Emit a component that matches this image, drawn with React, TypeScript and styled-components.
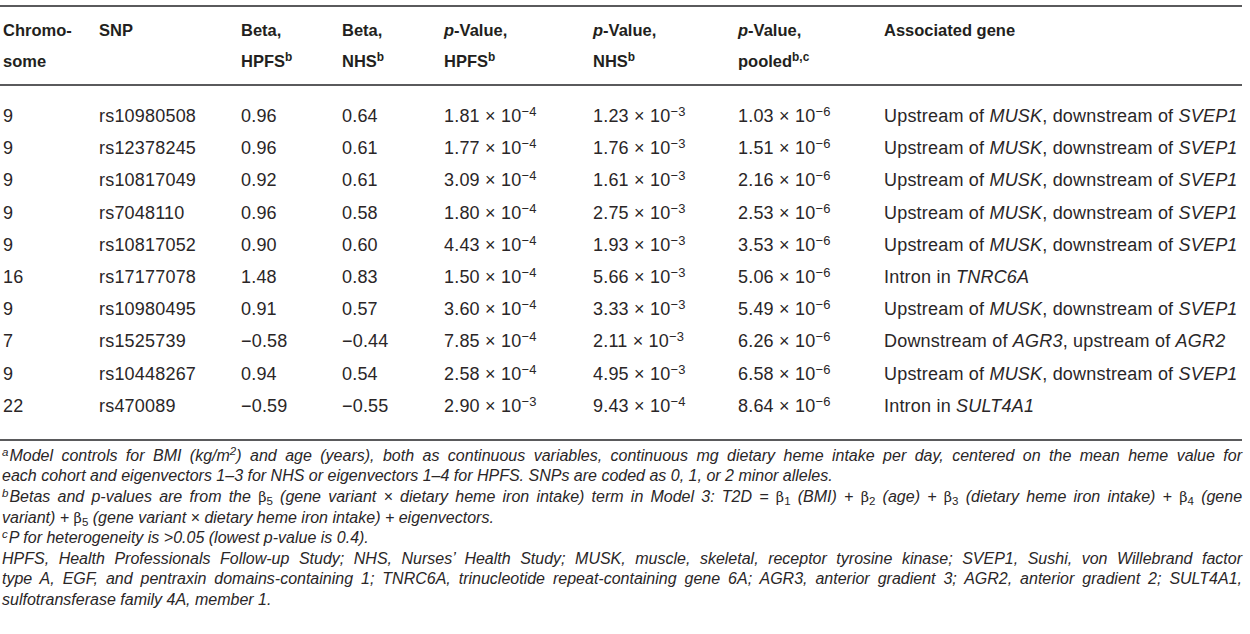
import React from "react";
import styled, { createGlobalStyle } from "styled-components";

const GlobalStyle = createGlobalStyle`
  html, body { margin: 0; padding: 0; background: #ffffff; }
  body {
    font-family: "Liberation Sans", Arial, Helvetica, sans-serif;
    color: #231f20;
  }
`;

const COLS = "96px 142px 101px 102px 149px 145px 146px 1fr";

const Page = styled.div`
  width: 1242px;
  padding-top: 5px;
`;

const Table = styled.div`
  display: flex;
  flex-direction: column;
`;

const HeaderRow = styled.div`
  display: grid;
  grid-template-columns: ${COLS};
  padding: 8px 0 7px 3px;
  border-top: 2px solid #5a5a5c;
  border-bottom: 2px solid #5a5a5c;
`;

const HeadCell = styled.div`
  font-weight: 700;
  font-size: 16.5px;
  line-height: 31px;
  white-space: nowrap;
`;

const Body = styled.div`
  display: flex;
  flex-direction: column;
  padding: 14px 0 17px 0;
  border-bottom: 2px solid #5a5a5c;
`;

const Row = styled.div`
  display: grid;
  grid-template-columns: ${COLS};
  padding-left: 3px;
  height: 32.2px;
  align-items: center;
`;

const Cell = styled.div`
  font-size: 18px;
  letter-spacing: 0.2px;
  line-height: 32px;
  white-space: nowrap;
  color: #2a2627;
`;

const Sup = styled.sup`
  font-size: 0.72em;
  vertical-align: 0.5em;
  line-height: 0;
`;

const Sub = styled.sub`
  font-size: 0.72em;
  vertical-align: -0.3em;
  line-height: 0;
  font-style: normal;
`;

const Ital = styled.i`
  font-style: italic;
`;

const Greek = styled.span`
  font-style: normal;
  font-family: "DejaVu Serif", "Liberation Serif", serif;
  font-size: 0.9em;
`;

const Notes = styled.div`
  padding: 5px 0 0 2px;
  font-style: italic;
  font-size: 16px;
  line-height: 20.6px;
  color: #2a2627;
`;

const NoteLine = styled.div<{ $full?: boolean }>`
  white-space: nowrap;
  text-align: ${(p) => (p.$full ? "justify" : "left")};
  text-align-last: ${(p) => (p.$full ? "justify" : "left")};
`;

const Mark = styled.sup`
  font-size: 0.72em;
  vertical-align: 0.45em;
  line-height: 0;
  margin-right: 1px;
`;

type Gene = { pre?: string; a?: string; mid?: string; b?: string };

type Data = {
  chr: string;
  snp: string;
  b1: string;
  b2: string;
  p1: [string, string];
  p2: [string, string];
  p3: [string, string];
  gene: Gene;
};

const musk: Gene = { pre: "Upstream of ", a: "MUSK", mid: ", downstream of ", b: "SVEP1" };

const rows: Data[] = [
  { chr: "9", snp: "rs10980508", b1: "0.96", b2: "0.64", p1: ["1.81", "4"], p2: ["1.23", "3"], p3: ["1.03", "6"], gene: musk },
  { chr: "9", snp: "rs12378245", b1: "0.96", b2: "0.61", p1: ["1.77", "4"], p2: ["1.76", "3"], p3: ["1.51", "6"], gene: musk },
  { chr: "9", snp: "rs10817049", b1: "0.92", b2: "0.61", p1: ["3.09", "4"], p2: ["1.61", "3"], p3: ["2.16", "6"], gene: musk },
  { chr: "9", snp: "rs7048110", b1: "0.96", b2: "0.58", p1: ["1.80", "4"], p2: ["2.75", "3"], p3: ["2.53", "6"], gene: musk },
  { chr: "9", snp: "rs10817052", b1: "0.90", b2: "0.60", p1: ["4.43", "4"], p2: ["1.93", "3"], p3: ["3.53", "6"], gene: musk },
  { chr: "16", snp: "rs17177078", b1: "1.48", b2: "0.83", p1: ["1.50", "4"], p2: ["5.66", "3"], p3: ["5.06", "6"], gene: { pre: "Intron in ", a: "TNRC6A" } },
  { chr: "9", snp: "rs10980495", b1: "0.91", b2: "0.57", p1: ["3.60", "4"], p2: ["3.33", "3"], p3: ["5.49", "6"], gene: musk },
  { chr: "7", snp: "rs1525739", b1: "\u22120.58", b2: "\u22120.44", p1: ["7.85", "4"], p2: ["2.11", "3"], p3: ["6.26", "6"], gene: { pre: "Downstream of ", a: "AGR3", mid: ", upstream of ", b: "AGR2" } },
  { chr: "9", snp: "rs10448267", b1: "0.94", b2: "0.54", p1: ["2.58", "4"], p2: ["4.95", "3"], p3: ["6.58", "6"], gene: musk },
  { chr: "22", snp: "rs470089", b1: "\u22120.59", b2: "\u22120.55", p1: ["2.90", "3"], p2: ["9.43", "4"], p3: ["8.64", "6"], gene: { pre: "Intron in ", a: "SULT4A1" } },
];

const PValue = ({ v }: { v: [string, string] }) => (
  <Cell>
    {v[0]} {"\u00d7"} 10<Sup>{"\u2212" + v[1]}</Sup>
  </Cell>
);

const GeneCell = ({ g }: { g: Gene }) => (
  <Cell>
    {g.pre}
    {g.a && <Ital>{g.a}</Ital>}
    {g.mid}
    {g.b && <Ital>{g.b}</Ital>}
  </Cell>
);

const B = ({ n }: { n: string }) => (
  <>
    <Greek>β</Greek>
    <Sub>{n}</Sub>
  </>
);

export default function App() {
  return (
    <Page>
      <GlobalStyle />
      <Table>
        <HeaderRow>
          <HeadCell>
            Chromo-
            <br />
            some
          </HeadCell>
          <HeadCell>SNP</HeadCell>
          <HeadCell>
            Beta,
            <br />
            HPFS<Sup>b</Sup>
          </HeadCell>
          <HeadCell>
            Beta,
            <br />
            NHS<Sup>b</Sup>
          </HeadCell>
          <HeadCell>
            <Ital>p</Ital>-Value,
            <br />
            HPFS<Sup>b</Sup>
          </HeadCell>
          <HeadCell>
            <Ital>p</Ital>-Value,
            <br />
            NHS<Sup>b</Sup>
          </HeadCell>
          <HeadCell>
            <Ital>p</Ital>-Value,
            <br />
            pooled<Sup>b,c</Sup>
          </HeadCell>
          <HeadCell>Associated gene</HeadCell>
        </HeaderRow>
        <Body>
          {rows.map((r, i) => (
            <Row key={i}>
              <Cell>{r.chr}</Cell>
              <Cell>{r.snp}</Cell>
              <Cell>{r.b1}</Cell>
              <Cell>{r.b2}</Cell>
              <PValue v={r.p1} />
              <PValue v={r.p2} />
              <PValue v={r.p3} />
              <GeneCell g={r.gene} />
            </Row>
          ))}
        </Body>
      </Table>
      <Notes>
        <NoteLine $full>
          <Mark>a</Mark>Model controls for BMI (kg/m<Sup>2</Sup>) and age (years), both as continuous variables, continuous mg
          dietary heme intake per day, centered on the mean heme value for
        </NoteLine>
        <NoteLine>
          each cohort and eigenvectors 1–3 for NHS or eigenvectors 1–4 for HPFS. SNPs are coded as 0, 1, or 2 minor alleles.
        </NoteLine>
        <NoteLine $full>
          <Mark>b</Mark>Betas and p-values are from the <B n="5" /> (gene variant {"\u00d7"} dietary heme iron intake) term in
          Model 3: T2D = <B n="1" /> (BMI) + <B n="2" /> (age) + <B n="3" /> (dietary heme iron intake) + <B n="4" /> (gene
        </NoteLine>
        <NoteLine>
          variant) + <B n="5" /> (gene variant {"\u00d7"} dietary heme iron intake) + eigenvectors.
        </NoteLine>
        <NoteLine>
          <Mark>c</Mark>P for heterogeneity is &gt;0.05 (lowest p-value is 0.4).
        </NoteLine>
        <NoteLine $full>
          HPFS, Health Professionals Follow-up Study; NHS, Nurses’ Health Study; MUSK, muscle, skeletal, receptor tyrosine
          kinase; SVEP1, Sushi, von Willebrand factor
        </NoteLine>
        <NoteLine $full>
          type A, EGF, and pentraxin domains-containing 1; TNRC6A, trinucleotide repeat-containing gene 6A; AGR3, anterior
          gradient 3; AGR2, anterior gradient 2; SULT4A1,
        </NoteLine>
        <NoteLine>sulfotransferase family 4A, member 1.</NoteLine>
      </Notes>
    </Page>
  );
}
